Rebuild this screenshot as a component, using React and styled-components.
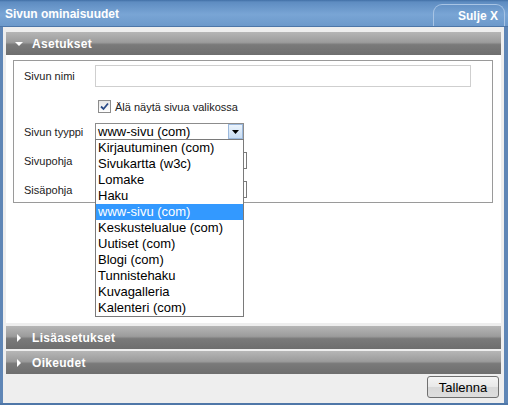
import styled, { createGlobalStyle } from "styled-components"

const GlobalStyle = createGlobalStyle`
    body{
        margin: 0;
        font-family: "Liberation Sans", Arial, sans-serif;
    }
`

const pageTypes = [
    "Kirjautuminen (com)",
    "Sivukartta (w3c)",
    "Lomake",
    "Haku",
    "www-sivu (com)",
    "Keskustelualue (com)",
    "Uutiset (com)",
    "Blogi (com)",
    "Tunnistehaku",
    "Kuvagalleria",
    "Kalenteri (com)",
]

function Arrow({ open }) {
    return (
        <svg width="8" height="8" viewBox="0 0 8 8">
            {open
                ? <polygon points="0,2 8,2 4,6" fill="#ffffff" />
                : <polygon points="2,0 6,4 2,8" fill="#ffffff" />}
        </svg>
    )
}

export default function App() {
    return (
        <Window>
            <GlobalStyle />
            <TitleBar>
                <Title>Sivun ominaisuudet</Title>
                <CloseTab>Sulje X</CloseTab>
            </TitleBar>
            <Body>
                <SectionHeader>
                    <ArrowBox><Arrow open /></ArrowBox>
                    Asetukset
                </SectionHeader>
                <Panel>
                    <FieldBox>
                        <Row>
                            <Label>Sivun nimi</Label>
                            <TextInput type="text" />
                        </Row>
                        <CheckRow>
                            <CheckBox>
                                <svg width="9" height="9" viewBox="0 0 9 9">
                                    <path d="M1 4.5 L3.5 7 L8 1.5" stroke="#2a4a86" strokeWidth="1.8" fill="none" />
                                </svg>
                            </CheckBox>
                            Älä näytä sivua valikossa
                        </CheckRow>
                        <Row>
                            <Label>Sivun tyyppi</Label>
                            <SelectWrap>
                                <Select>
                                    www-sivu (com)
                                    <SelectButton>
                                        <svg width="7" height="4" viewBox="0 0 7 4">
                                            <polygon points="0,0 7,0 3.5,4" fill="#000" />
                                        </svg>
                                    </SelectButton>
                                </Select>
                                <DropList>
                                    {pageTypes.map((t) => (
                                        <DropItem key={t} selected={t === "www-sivu (com)"}>{t}</DropItem>
                                    ))}
                                </DropList>
                            </SelectWrap>
                        </Row>
                        <Row>
                            <Label>Sivupohja</Label>
                            <Select wide />
                        </Row>
                        <Row>
                            <Label>Sisäpohja</Label>
                            <Select wide />
                        </Row>
                    </FieldBox>
                </Panel>
                <SectionHeader collapsed>
                    <ArrowBox><Arrow /></ArrowBox>
                    Lisäasetukset
                </SectionHeader>
                <SectionHeader collapsed second>
                    <ArrowBox><Arrow /></ArrowBox>
                    Oikeudet
                </SectionHeader>
                <Footer>
                    <SaveButton>Tallenna</SaveButton>
                </Footer>
            </Body>
        </Window>
    )
}

const Window = styled.div`
    width: 508px;
    height: 405px;
    box-sizing: border-box;
    display: flex;
    flex-direction: column;
    background-color: #5f86b6;
    border-bottom: 2px solid #4f77a8;
`
const TitleBar = styled.div`
    height: 27px;
    box-sizing: border-box;
    display: flex;
    justify-content: space-between;
    align-items: flex-end;
    background: linear-gradient(#416fa6 0px, #5e8cc1 2px, #79a5d5 55%, #6c99cb 100%);
    border-bottom: 1px solid #4d76a8;
    padding-right: 3px;
`
const Title = styled.div`
    align-self: center;
    padding-left: 5px;
    margin-top: 2px;
    font-size: 12px;
    font-weight: bold;
    color: #ffffff;
`
const CloseTab = styled.div`
    width: 72px;
    height: 22px;
    box-sizing: border-box;
    display: flex;
    align-items: center;
    justify-content: flex-end;
    padding-right: 6px;
    border: 1px solid #a8c4e4;
    border-bottom: none;
    border-radius: 9px 9px 0 0;
    font-size: 12px;
    font-weight: bold;
    color: #ffffff;
`
const Body = styled.div`
    flex: 1;
    display: flex;
    flex-direction: column;
    margin: 0 4px 0 3px;
    padding: 5px 3px 0 3px;
    background-color: #eeeeee;
`
const SectionHeader = styled.div`
    height: 23px;
    flex-shrink: 0;
    display: flex;
    align-items: center;
    background: linear-gradient(#b6b6b6 0%, #9c9c9c 45%, #7a7a7a 55%, #6e6e6e 100%);
    font-size: 12px;
    font-weight: bold;
    letter-spacing: 0.3px;
    color: #ffffff;
    margin-top: ${props => props.second ? "2px" : props.collapsed ? "3px" : "0"};
`
const ArrowBox = styled.span`
    width: 26px;
    display: flex;
    justify-content: center;
`
const Panel = styled.div`
    height: 268px;
    box-sizing: border-box;
    background-color: #ffffff;
    padding: 5px 8px 0 7px;
`
const FieldBox = styled.div`
    height: 143px;
    box-sizing: border-box;
    border: 1px solid #9a9a9a;
    padding: 4px 0 0 10px;
    display: flex;
    flex-direction: column;
`
const Row = styled.div`
    display: flex;
    align-items: center;
    margin-bottom: 12px;
`
const Label = styled.div`
    width: 71px;
    font-size: 11px;
    color: #222222;
`
const TextInput = styled.input`
    width: 376px;
    height: 22px;
    box-sizing: border-box;
    border: 1px solid #cfcfcf;
    margin: 0;
`
const CheckRow = styled.div`
    display: flex;
    align-items: center;
    gap: 4px;
    margin: 1px 0 10px 74px;
    font-size: 11px;
    color: #222222;
`
const CheckBox = styled.span`
    width: 11px;
    height: 11px;
    border: 1px solid #8c8c8c;
    background: linear-gradient(#e6e6e6, #ffffff);
    display: flex;
    align-items: center;
    justify-content: center;
`
const SelectWrap = styled.div`
    position: relative;
`
const Select = styled.div`
    width: ${props => props.wide ? "152px" : "149px"};
    height: 17px;
    box-sizing: border-box;
    border: 1px solid ${props => props.wide ? "#7a7a7a" : "#8c8c8c"};
    display: flex;
    align-items: center;
    justify-content: space-between;
    padding-left: 2px;
    font-size: 13px;
    color: #000000;
    background-color: #ffffff;
`
const SelectButton = styled.span`
    width: 15px;
    height: 15px;
    box-sizing: border-box;
    border: 1px solid #9cb9dd;
    background: linear-gradient(#eaf3fc, #c9ddf3);
    display: flex;
    align-items: center;
    justify-content: center;
`
const DropList = styled.div`
    position: absolute;
    top: 16px;
    left: 0;
    width: 149px;
    box-sizing: border-box;
    border: 1px solid #7a7a7a;
    background-color: #ffffff;
    z-index: 2;
`
const DropItem = styled.div`
    height: 16px;
    line-height: 16px;
    padding-left: 2px;
    font-size: 13px;
    color: ${props => props.selected ? "#ffffff" : "#000000"};
    background-color: ${props => props.selected ? "#3399ff" : "transparent"};
`
const Footer = styled.div`
    flex: 1;
    display: flex;
    justify-content: flex-end;
    align-items: flex-start;
    padding: 2px 2px 0 0;
`
const SaveButton = styled.button`
    width: 72px;
    height: 22px;
    border: 1px solid #707070;
    border-radius: 3px;
    background: linear-gradient(#f4f4f4 0%, #e8e8e8 50%, #d8d8d8 51%, #dedede 100%);
    font-family: "Liberation Sans", Arial, sans-serif;
    font-size: 13px;
    color: #000000;
    padding: 0;
`
